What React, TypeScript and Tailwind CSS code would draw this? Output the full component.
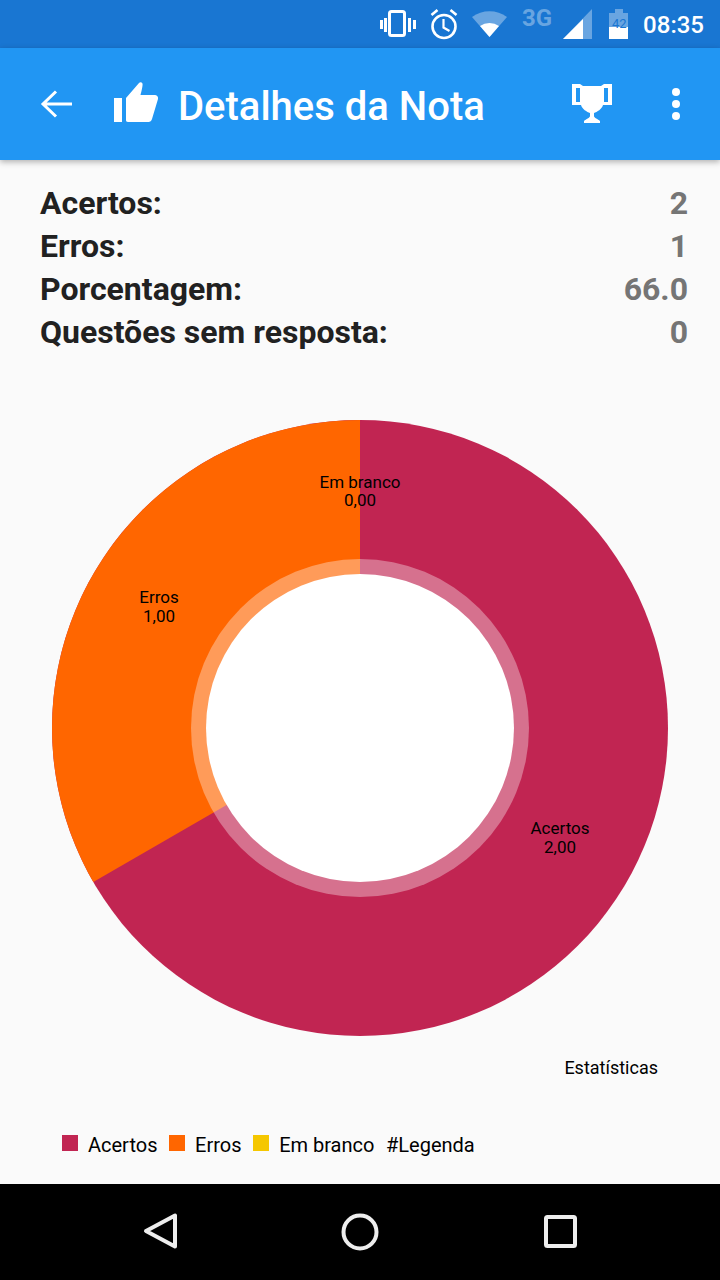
const STATS = [
  { label: 'Acertos:', value: '2' },
  { label: 'Erros:', value: '1' },
  { label: 'Porcentagem:', value: '66.0' },
  { label: 'Questões sem resposta:', value: '0' },
];

const LEGEND = [
  { label: 'Acertos', swatch: 'bg-[#c12552]' },
  { label: 'Erros', swatch: 'bg-[#ff6600]' },
  { label: 'Em branco', swatch: 'bg-[#f5c700]' },
];

function StatusBar() {
  return (
    <div className="h-12 bg-[#1976d2] relative shrink-0">
      <svg width="360" height="48" viewBox="0 0 360 48" className="absolute right-0 top-0">
        {/* vibrate */}
        <rect x="29.500" y="11.500" width="15" height="24" rx="2" fill="none" stroke="#fff" strokeWidth="3" />
        <rect x="24" y="18" width="3" height="14" fill="#fff" />
        <rect x="20" y="20" width="3" height="9" fill="#fff" />
        <rect x="48" y="18" width="3" height="14" fill="#fff" />
        <rect x="53" y="20" width="3" height="9" fill="#fff" />
        {/* alarm */}
        <circle cx="84" cy="26.500" r="11.500" fill="none" stroke="#fff" strokeWidth="2.600" />
        <path d="M83.500 19v8.500l6 3.500" fill="none" stroke="#fff" strokeWidth="2.200" />
        <path d="M71.500 15l6-5M96.500 15l-6-5" fill="none" stroke="#fff" strokeWidth="2.600" />
        {/* wifi */}
        <path d="M112 17a30 30 0 0 1 35 0L129.500 37z" fill="#fff" opacity="0.35" />
        <path d="M120 26a17 17 0 0 1 19 0L129.500 37z" fill="#fff" />
        {/* signal */}
        <path d="M232 9v30h-29z" fill="#fff" opacity="0.35" />
        <path d="M223 19v20h-20z" fill="#fff" />
        {/* battery */}
        <path d="M249 13h6v-4h8v4h5v26h-19z" fill="#fff" opacity="0.35" />
        <rect x="249" y="27" width="19" height="12" fill="#fff" />
      </svg>
      <span className="absolute left-[522px] top-[4px] text-[24px] leading-[28px] font-bold text-white/35 font-['Roboto',sans-serif]">3G</span>
      <span className="absolute left-[612px] top-[16px] text-[13px] leading-[15px] text-[#1976d2] font-['Roboto',sans-serif]">42</span>
      <span className="absolute right-[16px] top-[11px] text-[24px] leading-[28px] font-medium text-white font-['Roboto',sans-serif]">08:35</span>
    </div>
  );
}

function AppBar() {
  return (
    <div className="h-28 bg-[#2196f3] shrink-0 flex items-center relative z-10 shadow-[0_2px_6px_rgba(0,0,0,0.3)] font-['Roboto',sans-serif]">
      <svg width="32" height="32" viewBox="0 0 32 32" className="ml-10 mb-[1px]">
        <path d="M32 16H3M16 3.500 3 16l13 12.500" fill="none" stroke="#fff" strokeWidth="3" />
      </svg>
      <svg width="44" height="40" viewBox="0 0 44 40" className="ml-[42px] mb-[4px]">
        <path d="M0 16h8v24H0z" fill="#fff" />
        <path d="M14 40c-1.500 0-2-1-2-2V16L25 1c1-1.200 3-1 3.500.8.400 1.500-1 8.200-2 11.200h14.500c2 0 3.500 2 3 4l-6 20c-.5 2-2 3-3.500 3z" fill="#fff" />
      </svg>
      <span className="ml-5 mt-[6px] text-[40px] leading-[46px] font-medium text-white">Detalhes da Nota</span>
      <svg width="40" height="39" viewBox="0 0 40 39" className="ml-auto mb-[1px]">
        <path
          fillRule="evenodd"
          d="M0 0h8l3 2h18l3-2h8v21H31c-1 4-6 7-9 8v3c0 2 4 3 6 5v2H12v-2c2-2 6-3 6-5v-3c-3-1-8-4-9-8H0zM4 4v14h4V4zM32 4v14h4V4z"
          fill="#fff"
        />
      </svg>
      <svg width="10" height="34" viewBox="0 0 10 34" className="ml-[59px] mr-[39px]">
        <circle cx="5" cy="5" r="4" fill="#fff" />
        <circle cx="5" cy="17" r="4" fill="#fff" />
        <circle cx="5" cy="29" r="4" fill="#fff" />
      </svg>
    </div>
  );
}

function DonutChart() {
  return (
    <svg width="616" height="616" viewBox="0 0 616 616" className="block font-['Roboto',sans-serif]">
      <circle cx="308" cy="308" r="308" fill="#c12552" />
      <path d="M308 308V0A308 308 0 0 0 41.300 462z" fill="#ff6600" />
      <circle cx="308" cy="308" r="169" fill="#fff" opacity="0.35" />
      <circle cx="308" cy="308" r="154" fill="#fff" />
      <g fontSize="17" textAnchor="middle" fill="#000">
        <text x="308" y="68">Em branco</text>
        <text x="308" y="86">0,00</text>
        <text x="107" y="183">Erros</text>
        <text x="107" y="202">1,00</text>
        <text x="508" y="414">Acertos</text>
        <text x="508" y="433">2,00</text>
      </g>
    </svg>
  );
}

export default function App() {
  return (
    <div className="w-[720px] h-[1280px] flex flex-col overflow-hidden bg-[#fafafa] font-['Roboto',sans-serif]">
      <StatusBar />
      <AppBar />
      <div className="flex-1 min-h-0 flex flex-col">
        <div className="pt-[22px] pl-10 pr-8">
          {STATS.map(stat => (
            <div key={stat.label} className="flex justify-between text-[32px] leading-[43px] font-bold">
              <span className="text-[#212121]">{stat.label}</span>
              <span className="text-[#757575]">{stat.value}</span>
            </div>
          ))}
        </div>
        <div className="mt-[66px] flex justify-center">
          <DonutChart />
        </div>
        <div className="mt-[20px] pr-[62px] text-right text-[18px] leading-[24px] text-black">Estatísticas</div>
        <div className="mt-[53px] pl-[62px] flex items-center text-[20px] leading-[24px] text-black">
          {LEGEND.map(item => (
            <div key={item.label} className="flex items-center mr-[11.600px]">
              <span className={`w-4 h-4 mr-[10px] -mt-1 ${item.swatch}`} />
              <span>{item.label}</span>
            </div>
          ))}
          <span>#Legenda</span>
        </div>
      </div>
      <div className="h-24 bg-black shrink-0 flex items-center">
        <svg width="720" height="96" viewBox="0 0 720 96">
          <path d="M175 31.500v31L146 47z" fill="none" stroke="#eee" strokeWidth="4" strokeLinejoin="round" />
          <circle cx="360" cy="48" r="16.500" fill="none" stroke="#eee" strokeWidth="4" />
          <rect x="546" y="33" width="29" height="29" rx="1.500" fill="none" stroke="#eee" strokeWidth="4" />
        </svg>
      </div>
    </div>
  );
}
